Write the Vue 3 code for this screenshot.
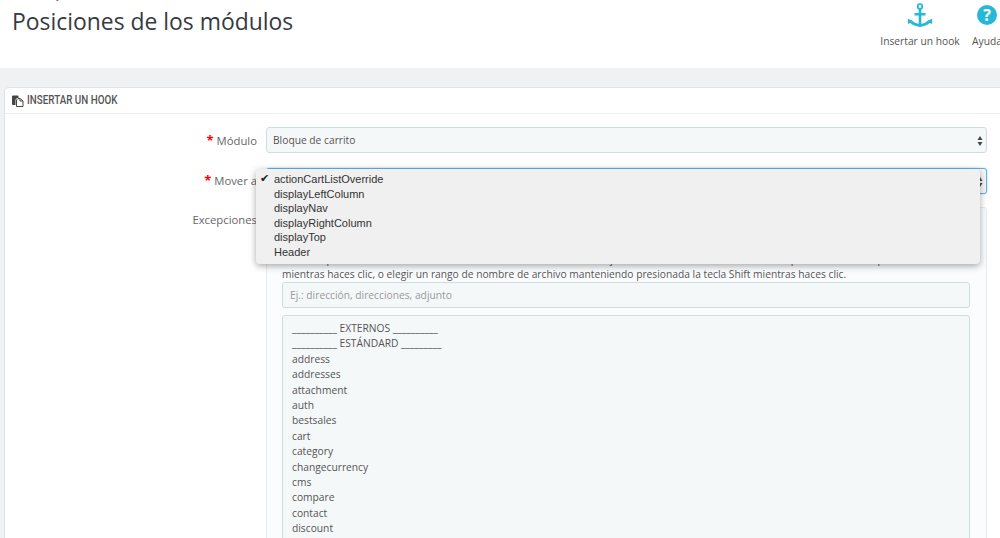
<script setup>
const options = ['actionCartListOverride', 'displayLeftColumn', 'displayNav', 'displayRightColumn', 'displayTop', 'Header']
const files = ['__________ EXTERNOS __________', '__________ ESTÁNDARD _________', 'address', 'addresses', 'attachment', 'auth', 'bestsales', 'cart', 'category', 'changecurrency', 'cms', 'compare', 'contact', 'discount']
</script>

<template>
  <div class="page">
    <header class="head">
      <div class="titles">
        <div class="crumb">Módulos y Servicios</div>
        <h1>Posiciones de los módulos</h1>
      </div>
      <div class="tools">
        <div class="tool hook">
          <svg class="ico" width="28" height="24" viewBox="0 0 28 24">
            <circle cx="14" cy="3.500" r="2.300" fill="none" stroke="#25b9d7" stroke-width="1.800" />
            <path d="M14 6v16M8.500 11.200h11" fill="none" stroke="#25b9d7" stroke-width="2.600" />
            <path d="M4.500 18c1.500 2.500 5 3.800 9.500 4.500 4.500-.7 8-2 9.500-4.500" fill="none" stroke="#25b9d7" stroke-width="2.800" />
            <path d="M1.800 15.500 7.500 18.800 2 21zM26.200 15.500 20.500 18.800 26 21z" fill="#25b9d7" />
          </svg>
          <span>Insertar un hook</span>
        </div>
        <div class="tool help">
          <span class="qmark">?</span>
          <span>Ayuda</span>
        </div>
      </div>
    </header>

    <main class="content">
      <section class="panel">
        <div class="panel-head">
          <svg width="12" height="12" viewBox="0 0 12 12">
            <path d="M0 1.500Q0 .5 1 .5h4.500q1 0 1 1V3H5L3.500 4.500V10H1q-1 0-1-1z" fill="#444" />
            <path d="M4.500 5 6 3.500h2V6H11v5.500H4.500z" fill="#fff" stroke="#444" stroke-width="1" />
            <path d="M8.500 3.500 11 6" stroke="#444" fill="none" />
          </svg>
          <span class="panel-title">INSERTAR UN HOOK</span>
        </div>
        <div class="form">
          <div class="row">
            <label><b>*</b> Módulo</label>
            <div class="select">
              Bloque de carrito
              <svg class="arrows" width="6" height="10" viewBox="0 0 6 10"><path d="M3 0 5.500 4H.5zM3 10 .5 6h5z" fill="#444" /></svg>
            </div>
          </div>
          <div class="row">
            <label class="mover"><b>*</b> Mover a</label>
            <div class="select focus">
              <svg class="arrows" width="6" height="10" viewBox="0 0 6 10"><path d="M3 0 5.500 4H.5zM3 10 .5 6h5z" fill="#444" /></svg>
              <ul class="menu">
                <li v-for="(o, i) in options" :key="o"><span v-if="i === 0" class="check">✔</span>{{ o }}</li>
              </ul>
            </div>
          </div>
          <div class="row">
            <label class="plain">Excepciones</label>
            <div class="box">
              <p class="help-text">También puedes hacer clic en el nombre de archivo en la lista de abajo, e incluso hacer una selección múltiple, manteniendo pulsada la tecla Ctrl<br>mientras haces clic, o elegir un rango de nombre de archivo manteniendo presionada la tecla Shift mientras haces clic.</p>
              <div class="input">Ej.: dirección, direcciones, adjunto</div>
              <div class="list">
                <div v-for="f in files" :key="f">{{ f }}</div>
              </div>
            </div>
          </div>
        </div>
      </section>
    </main>
  </div>
</template>

<style>
html, body { margin: 0; overflow: hidden; }
</style>

<style scoped>
.page {
  width: 1000px;
  height: 538px;
  overflow: hidden;
  font-family: "Open Sans", sans-serif;
  font-size: 10.250px;
  color: #555;
  background: #eff1f2;
}
.head {
  display: flex;
  justify-content: space-between;
  height: 68px;
  background: #fff;
  padding-left: 12px;
  overflow: hidden;
}
.titles { min-width: 0; }
.crumb {
  margin-top: -13px;
  height: 14px;
  line-height: 14px;
  color: #666;
}
h1 {
  margin: 0;
  padding-top: 5px;
  font-size: 22.900px;
  line-height: 32px;
  font-weight: 400;
  color: #363a41;
}
.tools {
  display: flex;
  gap: 12px;
  margin-right: -2px;
}
.tool {
  width: 80px;
  display: flex;
  flex-direction: column;
  align-items: center;
  padding-top: 3px;
  color: #555;
  white-space: nowrap;
}
.tool .ico { height: 24px; margin-bottom: 7px; }
.help { width: 30px; }
.qmark {
  width: 20px;
  height: 20px;
  margin: 2px 0 9px;
  border-radius: 50%;
  background: #25b9d7;
  color: #fff;
  font: 700 16px/20px "Open Sans", sans-serif;
  text-align: center;
}
.content {
  padding: 19px 0 0 4px;
}
.panel {
  width: 1010px;
  background: #fff;
  border: 1px solid #dfe3e6;
  border-radius: 5px;
  min-height: 600px;
}
.panel-head {
  display: flex;
  align-items: center;
  gap: 3px;
  height: 25px;
  margin-bottom: 13px;
  padding-left: 7px;
  border-bottom: 1px solid #eee;
}
.panel-title {
  display: inline-block;
  margin-top: -2px;
  font-family: Roboto, sans-serif;
  font-size: 12px;
  font-weight: 500;
  color: #555;
  transform: scaleX(.82);
  transform-origin: left center;
}
.form {
  display: flex;
  flex-direction: column;
  gap: 14px;
}
.row {
  display: grid;
  grid-template-columns: 252px 721px;
  column-gap: 9px;
}
label {
  text-align: right;
  font-size: 11.300px;
  line-height: 26px;
  color: #666;
}
label b { color: #f00; font-weight: 700; font-size: 13px; }
.mover { line-height: 24px; }
.plain { line-height: 24px; }
.select {
  position: relative;
  height: 26px;
  box-sizing: border-box;
  padding-left: 6px;
  line-height: 24px;
  background: #f5f8f9;
  border: 1px solid #cfdde2;
  border-radius: 3px;
  color: #555;
}
.focus { border-color: #66afe9; box-shadow: 0 0 2px rgba(102, 175, 233, .6); }
.arrows { position: absolute; right: 3px; top: 8px; }
.menu {
  position: absolute;
  left: -11px;
  top: 0;
  width: 724px;
  height: 95px;
  box-sizing: border-box;
  margin: 0;
  padding: 3px 0 0 18px;
  list-style: none;
  background: #f0f0f0;
  border-radius: 4px;
  box-shadow: 0 2px 7px rgba(0, 0, 0, .35);
  font-family: "Liberation Sans", sans-serif;
  font-size: 11px;
  line-height: 14.600px;
  color: #333;
  z-index: 2;
}
.menu li { position: relative; }
.check {
  position: absolute;
  left: -14px;
  font-size: 11px;
  color: #222;
  font-family: "DejaVu Sans", sans-serif;
}
.box {
  box-sizing: border-box;
  margin-top: -1px;
  padding: 44px 16px 0 15px;
  background: #fbfcfd;
  border: 1px solid #e6edf0;
  border-radius: 3px;
  min-height: 400px;
}
.help-text {
  margin: 0;
  line-height: 15px;
  white-space: nowrap;
  color: #555;
}
.input {
  height: 26px;
  box-sizing: border-box;
  padding-left: 7px;
  line-height: 24px;
  background: #f5f8f9;
  border: 1px solid #cfdde2;
  border-radius: 3px;
  color: #999;
}
.list {
  margin-top: 7px;
  padding: 5px 9px;
  height: 300px;
  background: #f5f8f9;
  border: 1px solid #cfdde2;
  border-radius: 3px;
  line-height: 15.400px;
  color: #555;
}
</style>
